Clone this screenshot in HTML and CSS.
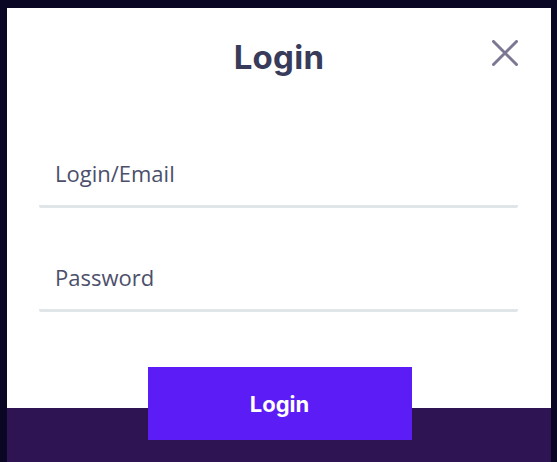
FILE: index.html
```html
<!DOCTYPE html>
<html>
<head>
<meta charset="utf-8">
<link rel="stylesheet" href="styles.css">
</head>
<body>
<div class="modal">
  <div class="header">
    <span></span>
    <h1 class="title">Login</h1>
    <button class="close" aria-label="Close">
      <svg width="26" height="26" viewBox="0 0 26 26"><path d="M1.5 1.5 L24.5 24.5 M24.5 1.5 L1.5 24.5" stroke="#7c7894" stroke-width="3" stroke-linecap="round" fill="none"/></svg>
    </button>
  </div>
  <form class="form">
    <div class="field">Login/Email</div>
    <div class="field">Password</div>
  </form>
  <div class="footer">
    <button class="submit">Login</button>
  </div>
</div>
</body>
</html>
```
FILE: styles.css
```css
html, body { margin: 0; padding: 0; }
body {
  background: #090723;
  height: 462px;
  overflow: hidden;
  font-family: "Open Sans", "Liberation Sans", sans-serif;
}
.modal {
  margin: 8px 6px 0 7px;
  background: #ffffff;
  display: flex;
  flex-direction: column;
}
.header {
  display: grid;
  grid-template-columns: 1fr auto 1fr;
  padding: 29px 32px 0 32px;
  height: 40px;
  margin-bottom: 63px;
}
.title {
  margin: 0;
  font-family: "Inter", "Lato", sans-serif;
  font-weight: 700;
  font-size: 33px;
  line-height: 40px;
  color: #383b5a;
  letter-spacing: 0.3px;
}
.close {
  justify-self: end;
  align-self: start;
  margin: 3px 1px 0 0;
  padding: 0;
  border: 0;
  background: none;
  width: 26px;
  height: 26px;
  display: block;
}
.close svg { display: block; }
.form {
  display: flex;
  flex-direction: column;
  gap: 36px;
  padding: 0 33px 0 32px;
}
.field {
  height: 65px;
  border-bottom: 3px solid #e0e6e8;
  border-radius: 0 0 2px 2px;
  padding-left: 16px;
  display: flex;
  align-items: center;
  font-size: 22px;
  color: #4c4f6b;
}
.footer {
  margin-top: 55px;
  height: 100px;
  background: linear-gradient(#ffffff 41px, #2e1452 41px);
  display: flex;
  justify-content: center;
  align-items: flex-start;
}
.submit {
  margin-left: 1px;
  width: 264px;
  height: 73px;
  border: 0;
  background: #5b1cf6;
  color: #ffffff;
  font-family: "Inter", "Lato", sans-serif;
  font-weight: 700;
  font-size: 22px;
  padding: 0;
}
```
